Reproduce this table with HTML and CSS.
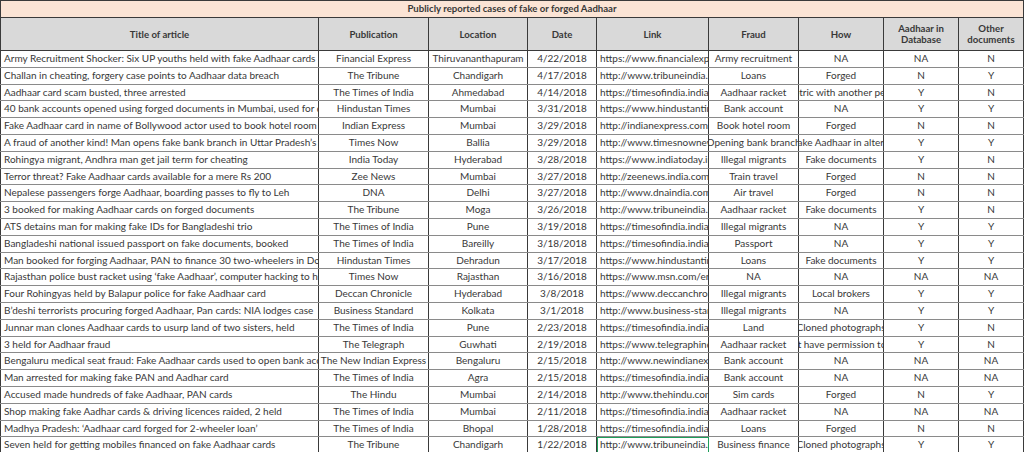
FILE: index.html
```html
<!DOCTYPE html>
<html>
<head>
<meta charset="utf-8">
<link rel="stylesheet" href="styles.css">
</head>
<body>
<table class="sheet">
<colgroup>
<col class="w-title"><col class="w-pub"><col class="w-loc"><col class="w-date"><col class="w-link"><col class="w-fraud"><col class="w-how"><col class="w-db"><col class="w-other">
</colgroup>
<thead>
<tr class="caption"><th colspan="9"><div class="cell c">Publicly reported cases of fake or forged Aadhaar</div></th></tr>
<tr class="head">
<th><div class="cell c">Title of article</div></th>
<th class="v-dark"><div class="cell c">Publication</div></th>
<th><div class="cell c">Location</div></th>
<th><div class="cell c">Date</div></th>
<th class="v-dark"><div class="cell c">Link</div></th>
<th class="v-dark"><div class="cell c">Fraud</div></th>
<th><div class="cell c">How</div></th>
<th><div class="cell c two">Aadhaar in<br>Database</div></th>
<th><div class="cell c two">Other<br>documents</div></th>
</tr>
</thead>
<tbody id="rows">
<tr><td><div class="cell l">Army Recruitment Shocker: Six UP youths held with fake Aadhaar cards</div></td><td><div class="cell c">Financial Express</div></td><td><div class="cell c">Thiruvananthapuram</div></td><td><div class="cell c">4/22/2018</div></td><td><div class="cell l">https://www.financialexpress.com/india-news/</div></td><td><div class="cell c">Army recruitment</div></td><td><div class="cell c">NA</div></td><td><div class="cell c">NA</div></td><td><div class="cell c">N</div></td></tr>
<tr><td><div class="cell l">Challan in cheating, forgery case points to Aadhaar data breach</div></td><td><div class="cell c">The Tribune</div></td><td><div class="cell c">Chandigarh</div></td><td><div class="cell c">4/17/2018</div></td><td><div class="cell l">http://www.tribuneindia.com/news/</div></td><td><div class="cell c">Loans</div></td><td><div class="cell c">Forged</div></td><td><div class="cell c">N</div></td><td><div class="cell c">Y</div></td></tr>
<tr><td><div class="cell l">Aadhaar card scam busted, three arrested</div></td><td><div class="cell c">The Times of India</div></td><td><div class="cell c">Ahmedabad</div></td><td><div class="cell c">4/14/2018</div></td><td><div class="cell l">https://timesofindia.indiatimes.com/</div></td><td><div class="cell c">Aadhaar racket</div></td><td><div class="cell c">Biometric with another person's</div></td><td><div class="cell c">Y</div></td><td><div class="cell c">N</div></td></tr>
<tr><td><div class="cell l">40 bank accounts opened using forged documents in Mumbai, used for demonetisation</div></td><td><div class="cell c">Hindustan Times</div></td><td><div class="cell c">Mumbai</div></td><td><div class="cell c">3/31/2018</div></td><td><div class="cell l">https://www.hindustantimes.com/</div></td><td><div class="cell c">Bank account</div></td><td><div class="cell c">NA</div></td><td><div class="cell c">Y</div></td><td><div class="cell c">Y</div></td></tr>
<tr><td><div class="cell l">Fake Aadhaar card in name of Bollywood actor used to book hotel room</div></td><td><div class="cell c">Indian Express</div></td><td><div class="cell c">Mumbai</div></td><td><div class="cell c">3/29/2018</div></td><td><div class="cell l">http://indianexpress.com/article/</div></td><td><div class="cell c">Book hotel room</div></td><td><div class="cell c">Forged</div></td><td><div class="cell c">N</div></td><td><div class="cell c">N</div></td></tr>
<tr><td><div class="cell l">A fraud of another kind! Man opens fake bank branch in Uttar Pradesh’s Ballia</div></td><td><div class="cell c">Times Now</div></td><td><div class="cell c">Ballia</div></td><td><div class="cell c">3/29/2018</div></td><td><div class="cell l">http://www.timesnownews.com/</div></td><td><div class="cell c">Opening bank branch</div></td><td><div class="cell c">Fake Aadhaar in altern</div></td><td><div class="cell c">Y</div></td><td><div class="cell c">Y</div></td></tr>
<tr><td><div class="cell l">Rohingya migrant, Andhra man get jail term for cheating</div></td><td><div class="cell c">India Today</div></td><td><div class="cell c">Hyderabad</div></td><td><div class="cell c">3/28/2018</div></td><td><div class="cell l">https://www.indiatoday.in/</div></td><td><div class="cell c">Illegal migrants</div></td><td><div class="cell c">Fake documents</div></td><td><div class="cell c">Y</div></td><td><div class="cell c">N</div></td></tr>
<tr><td><div class="cell l">Terror threat? Fake Aadhaar cards available for a mere Rs 200</div></td><td><div class="cell c">Zee News</div></td><td><div class="cell c">Mumbai</div></td><td><div class="cell c">3/27/2018</div></td><td><div class="cell l">http://zeenews.india.com/</div></td><td><div class="cell c">Train travel</div></td><td><div class="cell c">Forged</div></td><td><div class="cell c">N</div></td><td><div class="cell c">N</div></td></tr>
<tr><td><div class="cell l">Nepalese passengers forge Aadhaar, boarding passes to fly to Leh</div></td><td><div class="cell c">DNA</div></td><td><div class="cell c">Delhi</div></td><td><div class="cell c">3/27/2018</div></td><td><div class="cell l">http://www.dnaindia.com/</div></td><td><div class="cell c">Air travel</div></td><td><div class="cell c">Forged</div></td><td><div class="cell c">N</div></td><td><div class="cell c">N</div></td></tr>
<tr><td><div class="cell l">3 booked for making Aadhaar cards on forged documents</div></td><td><div class="cell c">The Tribune</div></td><td><div class="cell c">Moga</div></td><td><div class="cell c">3/26/2018</div></td><td><div class="cell l">http://www.tribuneindia.com/</div></td><td><div class="cell c">Aadhaar racket</div></td><td><div class="cell c">Fake documents</div></td><td><div class="cell c">Y</div></td><td><div class="cell c">N</div></td></tr>
<tr><td><div class="cell l">ATS detains man for making fake IDs for Bangladeshi trio</div></td><td><div class="cell c">The Times of India</div></td><td><div class="cell c">Pune</div></td><td><div class="cell c">3/19/2018</div></td><td><div class="cell l">https://timesofindia.indiatimes.com/</div></td><td><div class="cell c">Illegal migrants</div></td><td><div class="cell c">NA</div></td><td><div class="cell c">Y</div></td><td><div class="cell c">Y</div></td></tr>
<tr><td><div class="cell l">Bangladeshi national issued passport on fake documents, booked</div></td><td><div class="cell c">The Times of India</div></td><td><div class="cell c">Bareilly</div></td><td><div class="cell c">3/18/2018</div></td><td><div class="cell l">https://timesofindia.indiatimes.com/</div></td><td><div class="cell c">Passport</div></td><td><div class="cell c">NA</div></td><td><div class="cell c">Y</div></td><td><div class="cell c">Y</div></td></tr>
<tr><td><div class="cell l">Man booked for forging Aadhaar, PAN to finance 30 two-wheelers in Doon</div></td><td><div class="cell c">Hindustan Times</div></td><td><div class="cell c">Dehradun</div></td><td><div class="cell c">3/17/2018</div></td><td><div class="cell l">https://www.hindustantimes.com/</div></td><td><div class="cell c">Loans</div></td><td><div class="cell c">Fake documents</div></td><td><div class="cell c">Y</div></td><td><div class="cell c">Y</div></td></tr>
<tr><td><div class="cell l">Rajasthan police bust racket using ‘fake Aadhaar’, computer hacking to hijack</div></td><td><div class="cell c">Times Now</div></td><td><div class="cell c">Rajasthan</div></td><td><div class="cell c">3/16/2018</div></td><td><div class="cell l">https://www.msn.com/en-in/</div></td><td><div class="cell c">NA</div></td><td><div class="cell c">NA</div></td><td><div class="cell c">NA</div></td><td><div class="cell c">NA</div></td></tr>
<tr><td><div class="cell l">Four Rohingyas held by Balapur police for fake Aadhaar card</div></td><td><div class="cell c">Deccan Chronicle</div></td><td><div class="cell c">Hyderabad</div></td><td><div class="cell c">3/8/2018</div></td><td><div class="cell l">https://www.deccanchronicle.com/</div></td><td><div class="cell c">Illegal migrants</div></td><td><div class="cell c">Local brokers</div></td><td><div class="cell c">Y</div></td><td><div class="cell c">Y</div></td></tr>
<tr><td><div class="cell l">B’deshi terrorists procuring forged Aadhaar, Pan cards: NIA lodges case</div></td><td><div class="cell c">Business Standard</div></td><td><div class="cell c">Kolkata</div></td><td><div class="cell c">3/1/2018</div></td><td><div class="cell l">http://www.business-standard.com/</div></td><td><div class="cell c">Illegal migrants</div></td><td><div class="cell c">NA</div></td><td><div class="cell c">Y</div></td><td><div class="cell c">Y</div></td></tr>
<tr><td><div class="cell l">Junnar man clones Aadhaar cards to usurp land of two sisters, held</div></td><td><div class="cell c">The Times of India</div></td><td><div class="cell c">Pune</div></td><td><div class="cell c">2/23/2018</div></td><td><div class="cell l">https://timesofindia.indiatimes.com/</div></td><td><div class="cell c">Land</div></td><td><div class="cell c">Cloned photographs</div></td><td><div class="cell c">Y</div></td><td><div class="cell c">N</div></td></tr>
<tr><td><div class="cell l">3 held for Aadhaar fraud</div></td><td><div class="cell c">The Telegraph</div></td><td><div class="cell c">Guwhati</div></td><td><div class="cell c">2/19/2018</div></td><td><div class="cell l">https://www.telegraphindia.com/</div></td><td><div class="cell c">Aadhaar racket</div></td><td><div class="cell c">Did not have permission to enroll</div></td><td><div class="cell c">Y</div></td><td><div class="cell c">N</div></td></tr>
<tr><td><div class="cell l">Bengaluru medical seat fraud: Fake Aadhaar cards used to open bank accounts</div></td><td><div class="cell c">The New Indian Express</div></td><td><div class="cell c">Bengaluru</div></td><td><div class="cell c">2/15/2018</div></td><td><div class="cell l">http://www.newindianexpress.com/</div></td><td><div class="cell c">Bank account</div></td><td><div class="cell c">NA</div></td><td><div class="cell c">NA</div></td><td><div class="cell c">NA</div></td></tr>
<tr><td><div class="cell l">Man arrested for making fake PAN and Aadhar card</div></td><td><div class="cell c">The Times of India</div></td><td><div class="cell c">Agra</div></td><td><div class="cell c">2/15/2018</div></td><td><div class="cell l">https://timesofindia.indiatimes.com/</div></td><td><div class="cell c">Bank account</div></td><td><div class="cell c">NA</div></td><td><div class="cell c">NA</div></td><td><div class="cell c">NA</div></td></tr>
<tr><td><div class="cell l">Accused made hundreds of fake Aadhaar, PAN cards</div></td><td><div class="cell c">The Hindu</div></td><td><div class="cell c">Mumbai</div></td><td><div class="cell c">2/14/2018</div></td><td><div class="cell l">http://www.thehindu.com/</div></td><td><div class="cell c">Sim cards</div></td><td><div class="cell c">Forged</div></td><td><div class="cell c">N</div></td><td><div class="cell c">Y</div></td></tr>
<tr><td><div class="cell l">Shop making fake Aadhar cards &amp; driving licences raided, 2 held</div></td><td><div class="cell c">The Times of India</div></td><td><div class="cell c">Mumbai</div></td><td><div class="cell c">2/11/2018</div></td><td><div class="cell l">https://timesofindia.indiatimes.com/</div></td><td><div class="cell c">Aadhaar racket</div></td><td><div class="cell c">NA</div></td><td><div class="cell c">NA</div></td><td><div class="cell c">NA</div></td></tr>
<tr><td><div class="cell l">Madhya Pradesh: ‘Aadhaar card forged for 2-wheeler loan’</div></td><td><div class="cell c">The Times of India</div></td><td><div class="cell c">Bhopal</div></td><td><div class="cell c">1/28/2018</div></td><td><div class="cell l">https://timesofindia.indiatimes.com/</div></td><td><div class="cell c">Loans</div></td><td><div class="cell c">Forged</div></td><td><div class="cell c">N</div></td><td><div class="cell c">N</div></td></tr>
<tr><td><div class="cell l">Seven held for getting mobiles financed on fake Aadhaar cards</div></td><td><div class="cell c">The Tribune</div></td><td><div class="cell c">Chandigarh</div></td><td><div class="cell c">1/22/2018</div></td><td class="selected"><div class="cell l">http://www.tribuneindia.com/</div></td><td><div class="cell c">Business finance</div></td><td><div class="cell c">Cloned photographs</div></td><td><div class="cell c">Y</div></td><td><div class="cell c">Y</div></td></tr>
</tbody>
</table>
</body>
</html>
```

FILE: styles.css
```css
html, body {
  margin: 0;
  padding: 0;
  background: #ffffff;
}

.sheet {
  border-collapse: collapse;
  table-layout: fixed;
  width: 1023px;
  font-family: "Lato", "Open Sans", sans-serif;
  font-size: 10px;
  color: #383838;
}

.w-title { width: 318px; }
.w-pub { width: 110px; }
.w-loc { width: 99px; }
.w-date { width: 69px; }
.w-link { width: 112px; }
.w-fraud { width: 90px; }
.w-how { width: 85px; }
.w-db { width: 75px; }
.w-other { width: 65px; }

.sheet th,
.sheet td {
  padding: 0;
  border: 1px solid #3a3a3a;
  overflow: hidden;
}

.sheet td {
  border-top: 1px solid #8a8a8a;
  border-bottom: 1px solid #8a8a8a;
}

.cell {
  overflow: hidden;
  white-space: nowrap;
}

.cell.c {
  display: flex;
  justify-content: center;
  align-items: center;
}

.cell.l {
  padding-left: 3px;
}

.caption th {
  background: #fbe4d5;
  font-weight: 700;
  font-size: 9.6px;
  height: 16px;
  border: 1px solid #3a3a3a;
}

.caption .cell {
  line-height: 16px;
}

.head th {
  background: #d9d9d9;
  font-weight: 700;
  font-size: 9.6px;
  height: 32px;
}

.head .cell {
  height: 32px;
  line-height: 11px;
  text-align: center;
}

.head .two {
  flex-direction: column;
}

tbody td {
  height: 15.8px;
}

tbody .cell {
  height: 15.8px;
  line-height: 15.8px;
}

.sheet .v-dark {
  border-left: 1px solid #222;
}

.sheet td.selected {
  outline: 1px solid #1e9e5a;
  outline-offset: -1px;
}
```
